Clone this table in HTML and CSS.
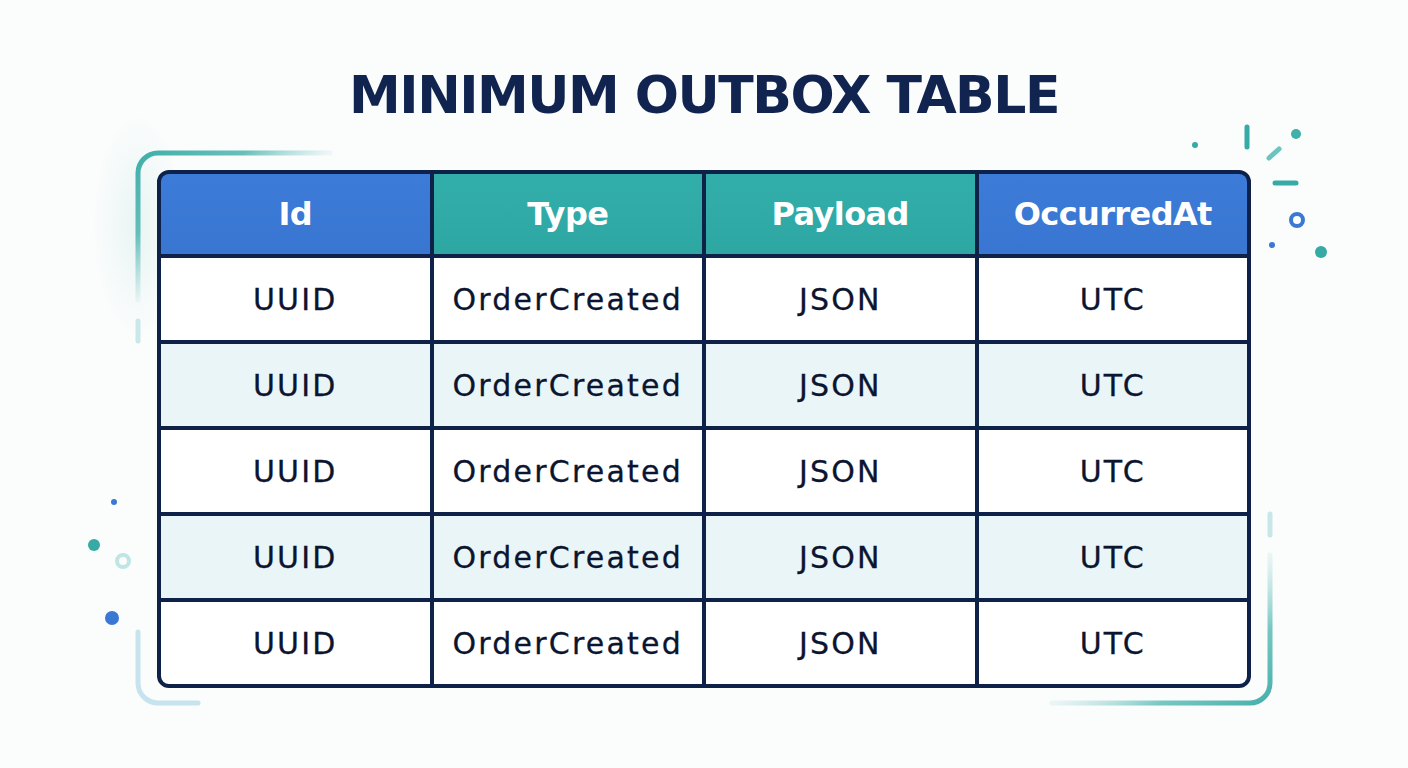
FILE: index.html
```html
<!DOCTYPE html>
<html lang="en">
<head>
<meta charset="utf-8">
<title>Minimum Outbox Table</title>
<link rel="stylesheet" href="styles.css">
</head>
<body>
<div class="page">
  <svg class="deco" width="1408" height="768" viewBox="0 0 1408 768" aria-hidden="true">
    <defs>
      <radialGradient id="glow" cx="0.5" cy="0.5" r="0.5">
        <stop offset="0" stop-color="#5cc0b8" stop-opacity="0.12"/>
        <stop offset="1" stop-color="#5cc0b8" stop-opacity="0"/>
      </radialGradient>
      <linearGradient id="tl" gradientUnits="userSpaceOnUse" x1="138" y1="153" x2="210" y2="246">
        <stop offset="0" stop-color="#3eafa9" stop-opacity="1"/>
        <stop offset="0.55" stop-color="#4db5b0" stop-opacity="0.85"/>
        <stop offset="1" stop-color="#7fcac6" stop-opacity="0.1"/>
      </linearGradient>
      <linearGradient id="br" gradientUnits="userSpaceOnUse" x1="1270" y1="703" x2="1201" y2="602">
        <stop offset="0" stop-color="#45b0ab" stop-opacity="1"/>
        <stop offset="0.5" stop-color="#5fbdb8" stop-opacity="0.85"/>
        <stop offset="1" stop-color="#a8dbd9" stop-opacity="0.2"/>
      </linearGradient>
    </defs>
    <ellipse cx="138" cy="225" rx="45" ry="110" fill="url(#glow)"/>
    <path d="M138 300 L138 173 A20 20 0 0 1 158 153 L330 153" fill="none" stroke="url(#tl)" stroke-width="5" stroke-linecap="round"/>
    <line x1="138" y1="321" x2="138" y2="341" stroke="#c9e8e9" stroke-width="5" stroke-linecap="round"/>
    <path d="M138 632 L138 683 A20 20 0 0 0 158 703 L198 703" fill="none" stroke="#c6e3ee" stroke-width="5" stroke-linecap="round"/>
    <path d="M1270 555 L1270 683 A20 20 0 0 1 1250 703 L1052 703" fill="none" stroke="url(#br)" stroke-width="5" stroke-linecap="round"/>
    <line x1="1270" y1="514" x2="1270" y2="535" stroke="#c8e7e7" stroke-width="5" stroke-linecap="round"/>

    <circle cx="1195" cy="145" r="3" fill="#36aaa5"/>
    <line x1="1247" y1="127" x2="1247" y2="147" stroke="#36aaa5" stroke-width="5" stroke-linecap="round"/>
    <circle cx="1296" cy="134" r="5" fill="#3fb0aa"/>
    <line x1="1269" y1="158" x2="1279" y2="149" stroke="#6cc4c0" stroke-width="5" stroke-linecap="round"/>
    <line x1="1275" y1="183" x2="1296" y2="183" stroke="#36aaa5" stroke-width="5" stroke-linecap="round"/>
    <circle cx="1297" cy="220" r="6" fill="none" stroke="#3a78d4" stroke-width="4"/>
    <circle cx="1272" cy="245" r="3" fill="#3a78d4"/>
    <circle cx="1321" cy="252" r="6" fill="#36aaa5"/>

    <circle cx="114" cy="502" r="3" fill="#3a78d4"/>
    <circle cx="94" cy="545" r="6" fill="#36aaa5"/>
    <circle cx="123" cy="561" r="6" fill="none" stroke="#bfe5e5" stroke-width="4"/>
    <circle cx="112" cy="618" r="7" fill="#3a78d4"/>
  </svg>

  <h1 class="title">MINIMUM OUTBOX TABLE</h1>

  <div class="table">
    <div class="th th-blue">Id</div>
    <div class="th th-teal">Type</div>
    <div class="th th-teal">Payload</div>
    <div class="th th-blue">OccurredAt</div>

    <div class="td">UUID</div><div class="td">OrderCreated</div><div class="td">JSON</div><div class="td">UTC</div>
    <div class="td alt">UUID</div><div class="td alt">OrderCreated</div><div class="td alt">JSON</div><div class="td alt">UTC</div>
    <div class="td">UUID</div><div class="td">OrderCreated</div><div class="td">JSON</div><div class="td">UTC</div>
    <div class="td alt">UUID</div><div class="td alt">OrderCreated</div><div class="td alt">JSON</div><div class="td alt">UTC</div>
    <div class="td">UUID</div><div class="td">OrderCreated</div><div class="td">JSON</div><div class="td">UTC</div>
  </div>
</div>
</body>
</html>
```

FILE: styles.css
```css
* {
  box-sizing: border-box;
}

html, body {
  margin: 0;
  padding: 0;
}

body {
  background: #fbfcfc;
  font-family: "DejaVu Sans", "Liberation Sans", sans-serif;
}

.page {
  position: relative;
  width: 1408px;
  height: 768px;
  display: flex;
  flex-direction: column;
  align-items: center;
  overflow: hidden;
}

.deco {
  position: absolute;
  top: 0;
  left: 0;
  pointer-events: none;
  z-index: 0;
}

.title {
  position: relative;
  z-index: 1;
  margin: 63px 0 43px;
  font-size: 52px;
  line-height: 64px;
  font-weight: 700;
  letter-spacing: -1.5px;
  color: #10244f;
}

.table {
  position: relative;
  z-index: 1;
  width: 1094px;
  display: grid;
  grid-template-columns: repeat(4, 1fr);
  grid-template-rows: 80px repeat(5, 82px);
  gap: 4px;
  border: 4px solid #0e2149;
  border-radius: 12px;
  background: #0e2149;
  overflow: hidden;
}

.th,
.td {
  display: flex;
  align-items: center;
  justify-content: center;
}

.th {
  color: #ffffff;
  font-size: 32px;
  font-weight: 700;
  letter-spacing: -0.6px;
}

.th-blue {
  background: linear-gradient(180deg, #3c7bd7 0%, #3876d2 100%);
}

.th-teal {
  background: linear-gradient(180deg, #32aeaa 0%, #2ea7a3 100%);
}

.td {
  background: #ffffff;
  color: #0c1530;
  font-size: 30px;
  letter-spacing: 2.2px;
  -webkit-text-stroke: 0.3px #0c1530;
}

.td.alt {
  background: #eaf5f7;
}
```
